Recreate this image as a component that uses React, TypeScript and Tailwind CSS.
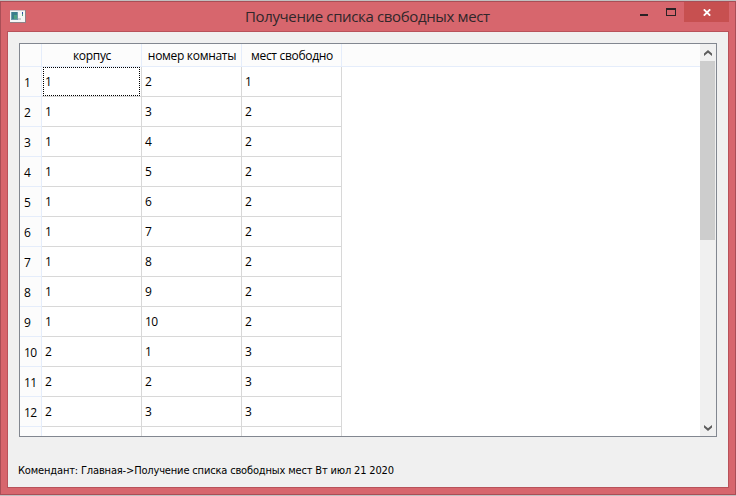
const columns = ["корпус", "номер комнаты", "мест свободно"];

const rooms = [
  [1, 2, 1],
  [1, 3, 2],
  [1, 4, 2],
  [1, 5, 2],
  [1, 6, 2],
  [1, 7, 2],
  [1, 8, 2],
  [1, 9, 2],
  [1, 10, 2],
  [2, 1, 3],
  [2, 2, 3],
  [2, 3, 3],
];

function AppIcon() {
  return (
    <svg width="16" height="13" viewBox="0 0 16 13" shapeRendering="crispEdges">
      <rect width="16" height="13" fill="#8f8085" />
      <rect x="0" y="0" width="15" height="12" fill="#f4f6f6" />
      <rect x="0" y="0" width="15" height="1" fill="#c9c4c8" />
      <rect x="1" y="2" width="7" height="8" fill="#6b9aab" />
      <rect x="2" y="2" width="5" height="7" fill="#397f8c" />
      <rect x="4" y="5" width="3" height="4" fill="#4da282" />
      <rect x="8" y="8" width="3" height="2" fill="#c9cccf" />
      <rect x="12" y="2" width="1" height="2" fill="#2e50a4" />
      <rect x="12" y="4" width="1" height="2" fill="#4fa07f" />
    </svg>
  );
}

function Chevron({ down = false }: { down?: boolean }) {
  return (
    <svg width="8" height="6" viewBox="0 0 8 6" className={down ? "rotate-180" : ""}>
      <path d="M0 3.6 4 0 8 3.6V6L4 2.7 0 6Z" fill="#5c5c5c" />
    </svg>
  );
}

function TitleBar() {
  return (
    <header className="flex h-[29px] shrink-0 items-start">
      <div className="w-[61px] pt-2 pl-[9px]">
        <AppIcon />
      </div>
      <h1 className="flex-1 pl-[183px] font-['Open_Sans',sans-serif] text-[15px] leading-[29px] tracking-[-0.36px] whitespace-nowrap text-[#30272a]">
        Получение списка свободных мест
      </h1>
      <div className="flex h-5">
        <button className="flex w-[27px] pt-[12px] pl-[8px]" aria-label="Свернуть">
          <span className="h-[2px] w-2 bg-[#2b2225]" />
        </button>
        <button className="flex w-[25px] pt-[6px] pl-[7px]" aria-label="Развернуть">
          <span className="h-2 w-[10px] border border-t-2 border-[#2b2225]" />
        </button>
        <button className="flex h-5 w-[45px] items-center justify-center bg-[#c75050]" aria-label="Закрыть">
          <svg width="8" height="7" viewBox="0 0 8 7">
            <path d="M0.8 0.3 7.2 6.7M7.2 0.3 0.8 6.7" stroke="#fff" strokeWidth="1.8" />
          </svg>
        </button>
        <span className="w-[6px]" />
      </div>
    </header>
  );
}

function RoomTable() {
  return (
    <div className="flex h-[394px] w-[698px] overflow-hidden border border-[#828790] bg-white font-['Open_Sans',sans-serif] text-[12px] text-black">
      <div className="w-[680px] overflow-hidden">
        <div className="flex h-[23px] border-b border-[#e5edfb] bg-[#fcfcfc] text-center leading-[24px] tracking-[-0.3px] whitespace-nowrap">
          <div className="w-[22px] border-r border-[#e5edfb]" />
          {columns.map((c) => (
            <div key={c} className="w-[100px] border-r border-[#e5edfb] pl-px">
              {c}
            </div>
          ))}
        </div>
        {rooms.map((row, r) => (
          <div key={r} className="flex h-[30px] tracking-[-0.6px]">
            <div className="w-[22px] border-r border-b border-[#e5edfb] bg-[#fcfcfc] pl-[4px] leading-[32px]">{r + 1}</div>
            {row.map((value, c) => (
              <div key={c} className="flex w-[100px] border-r border-b border-[#d8d8d8]">
                <div
                  className={
                    r === 0 && c === 0
                      ? "ml-px h-[29px] w-[97px] border border-dotted border-black pl-px leading-[28px]"
                      : "pl-[3px] leading-[30px]"
                  }
                >
                  {value}
                </div>
              </div>
            ))}
          </div>
        ))}
        <div className="flex h-[9px]">
          <div className="w-[22px] border-r border-[#e5edfb] bg-[#fcfcfc]" />
          {columns.map((c) => (
            <div key={c} className="w-[100px] border-r border-[#d8d8d8]" />
          ))}
        </div>
      </div>
      <div className="flex w-[15px] flex-col items-center bg-[#f0f0f0]">
        <div className="flex h-[17px] items-center">
          <Chevron />
        </div>
        <div className="h-[179px] w-full bg-[#cdcdcd]" />
        <div className="flex-1" />
        <div className="flex h-[17px] items-center">
          <Chevron down />
        </div>
      </div>
      <div className="w-px bg-[#f0f0f0]" />
    </div>
  );
}

export default function App() {
  return (
    <div className="h-[496px] w-[736px] overflow-hidden border-y border-[#c0c0c0] bg-[#d7666d]">
      <div className="flex h-[494px] flex-col border border-[#a94e56]">
        <TitleBar />
        <main className="mx-[6px] h-[457px] border border-[#b8525a] bg-[#f0f0f0] pt-[11px] pl-[11px]">
          <RoomTable />
          <p className="mt-[26px] -ml-px font-['DejaVu_Sans_Condensed','DejaVu_Sans',sans-serif] text-[11px] leading-4 tracking-[-0.16px] whitespace-nowrap text-black">
            Комендант: Главная-&gt;Получение списка свободных мест Вт июл 21 2020
          </p>
        </main>
      </div>
    </div>
  );
}
